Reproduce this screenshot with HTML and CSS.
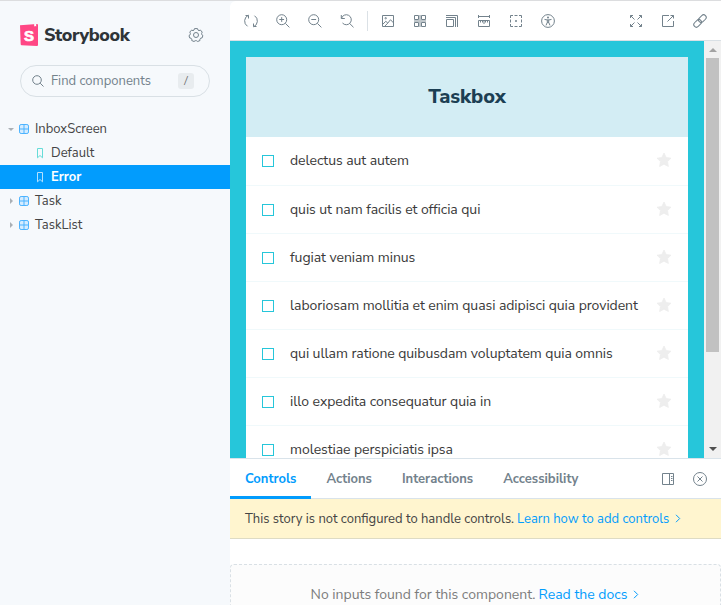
FILE: index.html
```html
<!DOCTYPE html>
<html lang="en">
<head>
<meta charset="utf-8">
<title>Storybook</title>
<link rel="stylesheet" href="styles.css">
</head>
<body>
<svg class="defs" aria-hidden="true">
  <symbol id="component" viewBox="0 0 10 10"><rect x=".5" y=".5" width="9" height="9" rx="1.600"/><path d="M5 1v8M1 5h8"/></symbol>
  <symbol id="bookmark" viewBox="0 0 8 11"><path d="M1.500 .5h5v9.300L4 7.500l-2.500 2.300z"/></symbol>
  <symbol id="star" viewBox="0 0 14 14"><path d="M7 0l2.200 4.500 4.800.7-3.500 3.400.9 4.900L7 11.200l-4.400 2.300.9-4.900L0 5.200l4.800-.7z"/></symbol>
  <symbol id="chevron" viewBox="0 0 6 9"><path d="M1 .8l3.700 3.700L1 8.200"/></symbol>
</svg>
<div class="app">
  <aside class="sidebar">
    <header class="brand">
      <svg class="logo" viewBox="0 0 18 22"><path d="M0 1.300L17 0q1 0 1 1v20q0 1-1 1L1.700 21.300q-1 0-1-1z"/><path class="notch" d="M14.200 0l2-.1v2.700l-1-.7-1 .7z"/><text x="9" y="17" text-anchor="middle">S</text></svg>
      <h1>Storybook</h1>
      <svg class="icon gear" viewBox="0 0 14 14"><path d="M5.500.6h3l.5 1.500 1 .5 1.500-.5 1.700 2-.6 1.500.3 1.200 1 .8-.8 2.300-1.400.3-.8 1 .1 1.300-2.300 1-1.200-.8H6.200l-1.200.8-2.300-1 .1-1.300-.8-1-1.400-.3L0 7.600l1.100-.8.300-1.200L.8 4.100l1.700-2 1.500.5 1-.5z"/><circle cx="7" cy="7" r="2.500"/></svg>
    </header>
    <div class="search">
      <svg class="icon" viewBox="0 0 12 12"><circle cx="5" cy="5" r="4.300"/><path d="M8.200 8.200l3.300 3.300"/></svg>
      <span>Find components</span><kbd>/</kbd>
    </div>
    <nav class="tree">
      <div class="node"><i class="arrow open"></i><svg class="component"><use href="#component"/></svg><span>InboxScreen</span></div>
      <div class="node story"><svg class="bookmark"><use href="#bookmark"/></svg><span>Default</span></div>
      <div class="node story selected"><svg class="bookmark"><use href="#bookmark"/></svg><span>Error</span></div>
      <div class="node"><i class="arrow"></i><svg class="component"><use href="#component"/></svg><span>Task</span></div>
      <div class="node"><i class="arrow"></i><svg class="component"><use href="#component"/></svg><span>TaskList</span></div>
    </nav>
  </aside>
  <main class="main">
    <div class="toolbar">
      <button><svg class="icon" viewBox="0 0 14 14"><path d="M4.500 1.200A6.300 6.300 0 0 0 3.500 12.300M1.500 1.500h3v3M9.500 12.800A6.300 6.300 0 0 0 10.500 1.700M12.500 12.500h-3v-3"/></svg></button>
      <button><svg class="icon" viewBox="0 0 14 14"><circle cx="5.700" cy="5.700" r="5"/><path d="M9.400 9.400l4 4M3.300 5.500h4.800M5.700 3.100v4.800"/></svg></button>
      <button><svg class="icon" viewBox="0 0 14 14"><circle cx="5.700" cy="5.700" r="5"/><path d="M9.400 9.400l4 4M3.300 5.500h4.800"/></svg></button>
      <button><svg class="icon" viewBox="0 0 14 14"><path d="M1.300 1v3.500h3.500M1.500 4.300a5 5 0 1 1 1 4.700M9.700 9.500l3.800 3.800"/></svg></button>
      <i class="divider"></i>
      <button><svg class="icon" viewBox="0 0 14 14"><path d="M1.500 1.500h11v11h-11zM1.500 10.500l3.300-3.200 2 1.800 2.700-3.400 3 3.200M3.500 12.500l3.300-3.400"/><circle cx="4.700" cy="4.200" r=".7"/></svg></button>
      <button><svg class="icon" viewBox="0 0 14 14"><path d="M1.500 1.500h4v4h-4zM8.500 1.500h4v4h-4zM1.500 8.500h4v4h-4zM8.500 8.500h4v4h-4z"/><path class="faint" d="M7 1v12M1 7h12"/></svg></button>
      <button><svg class="icon" viewBox="0 0 14 14"><path d="M1.500 5.500h7v7h-7zM1 3.500h9.500V13M1 1.500h11.500V13"/></svg></button>
      <button><svg class="icon" viewBox="0 0 14 14"><path d="M1.500 1v3M12.500 1v3M1.500 2.500h11M1.500 6.500h11v6h-11zM3.500 6.500v2M5.500 6.500v2M7 6.500v3.500M8.500 6.500v2M10.500 6.500v2"/></svg></button>
      <button><svg class="icon" viewBox="0 0 14 14"><path d="M1.500 4V1.500H4M5.500 1.500h3M10 1.500h2.500V4M12.500 5.500v3M12.500 10v2.500H10M8.500 12.500h-3M4 12.500H1.500V10M1.500 8.500v-3M6 7h2M7 6v2"/></svg></button>
      <button><svg class="icon" viewBox="0 0 14 14"><circle cx="7" cy="7" r="6.400"/><circle class="solid" cx="7" cy="3.500" r="1"/><path d="M3.500 5.400l2.500.5h2l2.500-.5M6.300 5.900v2.500l-1.300 3M7.700 5.900v2.500l1.300 3M6 8.300h2"/></svg></button>
      <span class="spacer"></span>
      <button><svg class="icon" viewBox="0 0 14 14"><path d="M1.500 4V1.500H4M1.500 1.500l4 4M10 1.500h2.500V4M12.500 1.500l-4 4M1.500 10v2.500H4M1.500 12.500l4-4M10 12.500h2.500V10M12.500 12.500l-4-4"/></svg></button>
      <button><svg class="icon" viewBox="0 0 14 14"><path d="M8 1.500H1.500v11h11V7M9.500 1.500h3v3M12.500 1.500L6.500 7.500"/></svg></button>
      <button><svg class="icon" viewBox="0 0 14 14"><g transform="rotate(-45 7 7)"><rect x="-.7" y="4.400" width="8.700" height="5.200" rx="2.600"/><rect x="6" y="4.400" width="8.700" height="5.200" rx="2.600"/></g></svg></button>
    </div>
    <div class="preview">
      <section class="canvas">
        <header class="title">Taskbox</header>
        <div class="task"><i class="check"></i><span>delectus aut autem</span><svg class="star"><use href="#star"/></svg></div>
        <div class="task"><i class="check"></i><span>quis ut nam facilis et officia qui</span><svg class="star"><use href="#star"/></svg></div>
        <div class="task"><i class="check"></i><span>fugiat veniam minus</span><svg class="star"><use href="#star"/></svg></div>
        <div class="task"><i class="check"></i><span>laboriosam mollitia et enim quasi adipisci quia provident</span><svg class="star"><use href="#star"/></svg></div>
        <div class="task"><i class="check"></i><span>qui ullam ratione quibusdam voluptatem quia omnis</span><svg class="star"><use href="#star"/></svg></div>
        <div class="task"><i class="check"></i><span>illo expedita consequatur quia in</span><svg class="star"><use href="#star"/></svg></div>
        <div class="task"><i class="check"></i><span>molestiae perspiciatis ipsa</span><svg class="star"><use href="#star"/></svg></div>
      </section>
      <div class="scrollbar"><i class="up"></i><i class="thumb"></i><i class="down"></i></div>
    </div>
    <div class="tabs">
      <span class="tab active">Controls</span><span class="tab">Actions</span><span class="tab">Interactions</span><span class="tab">Accessibility</span>
      <span class="spacer"></span>
      <button><svg class="icon" viewBox="0 0 14 14"><path d="M1.500 1.500h11v11h-11zM8.500 1.500v11M10 4.500h1.500M10 6.500h1.500M10 8.500h1.500"/></svg></button>
      <button><svg class="icon" viewBox="0 0 14 14"><circle cx="7" cy="7" r="6.500"/><path d="M4.500 4.500l5 5M9.500 4.500l-5 5"/></svg></button>
    </div>
    <div class="notice"><span>This story is not configured to handle controls.</span><a>Learn how to add controls</a><svg class="chevron"><use href="#chevron"/></svg></div>
    <div class="empty"><span>No inputs found for this component.</span><a>Read the docs</a><svg class="chevron"><use href="#chevron"/></svg></div>
  </main>
</div>
</body>
</html>
```
FILE: styles.css
```css
* { box-sizing: border-box; }
body { margin: 0; font: 13px/20px "Nunito Sans", Lato, "Open Sans", sans-serif; color: #444; overflow: hidden; }
.defs { position: absolute; width: 0; height: 0; }
svg { display: block; flex: none; overflow: visible; }
button { border: 0; padding: 0; background: none; width: 28px; height: 28px; display: flex; align-items: center; justify-content: center; flex: none; }
.icon { width: 14px; height: 14px; fill: none; stroke: #73828c; stroke-width: 1; }
.icon .faint { stroke-opacity: .45; stroke-width: 2; }
.icon .solid { fill: #73828c; stroke: none; }
.spacer { flex: 1; }
.app { display: flex; width: 721px; height: 605px; border-top: 1px solid #dcdddf; background: #f6f9fc; }

.sidebar { width: 230px; flex: none; }
.brand { display: flex; align-items: center; margin: 23px 27px 0 20px; height: 22px; }
.logo { width: 18px; height: 22px; fill: #ff4785; }
.logo .notch { fill: #fff; }
.logo text { fill: #fff; stroke: #fff; stroke-width: .7; font: 700 15px "Liberation Sans", sans-serif; }
h1 { margin: 0 auto 0 6px; font-size: 18px; line-height: 22px; font-weight: 800; letter-spacing: -.4px; color: #2e3438; }
.search { display: flex; align-items: center; margin: 19px 20px 0; height: 32px; border: 1px solid #d9e0e5; border-radius: 16px; padding: 0 15px 0 11px; color: #73828c; }
.search .icon { width: 12px; height: 12px; margin-right: 7px; }
kbd { margin-left: auto; width: 16px; height: 16px; border-radius: 3px; background: #e8ecef; font: 11px/16px Lato, sans-serif; text-align: center; color: #666; }
.tree { margin-top: 20px; }
.node { display: flex; align-items: center; height: 24px; padding-left: 8px; }
.node span { margin-top: -1px; }
.arrow { width: 11px; height: 8px; display: flex; align-items: center; justify-content: flex-start; padding-left: 2px; }
.arrow::before { content: ""; border: 3px solid transparent; border-left: 3px solid #aab0b5; border-right: 0; }
.arrow.open { padding-left: 0; }
.arrow.open::before { border: 3px solid transparent; border-top: 3px solid #aab0b5; border-bottom: 0; }
.component { width: 10px; height: 10px; margin-right: 6px; fill: #d5ecff; stroke: #4bb3ff; stroke-width: 1; }
.story { padding-left: 36px; }
.bookmark { width: 8px; height: 11px; margin-right: 7px; fill: none; stroke: #66dcd8; }
.selected { background: #029cfd; color: #fff; font-weight: 700; }
.selected .bookmark { stroke: #b3e1ff; }

.main { width: 491px; height: 604px; overflow: hidden; background: #fff; border-radius: 6px 0 0 0; display: flex; flex-direction: column; }
.toolbar { display: flex; align-items: center; gap: 4px; height: 40px; flex: none; padding: 0 7px; border-bottom: 1px solid #d9e0e5; }
.divider { width: 1px; height: 20px; background: #dbe1e6; margin: 0 2px; }
.preview { display: flex; height: 417px; flex: none; overflow: hidden; background: #26c6da; }
.canvas { margin: 16px 16px 0; width: 442px; flex: none; font-size: 14px; letter-spacing: -.06px; color: #3a3a3a; }
.title { height: 80px; background: #d3edf4; text-align: center; font-size: 20px; line-height: 79px; font-weight: 800; color: #1c3f53; }
.task { display: flex; align-items: center; height: 48px; background: #fff; border-bottom: 1px solid #f0f9fb; padding: 0 17px 0 16px; }
.task:nth-child(2) { height: 49px; padding-bottom: 1px; }
.check { width: 12px; height: 12px; border: 1px solid #26c6da; margin-right: 16px; margin-top: 1px; }
.star { width: 14px; height: 14px; margin-left: auto; margin-top: -1px; fill: #eee; stroke: #eee; stroke-width: .8; stroke-linejoin: round; }
.scrollbar { width: 17px; background: #f1f1f1; display: flex; flex-direction: column; align-items: center; flex: none; }
.up { margin-top: 7px; border: 4px solid transparent; border-bottom: 4px solid #a3a3a3; border-top: 0; }
.thumb { margin-top: 6px; width: 13px; height: 294px; background: #c1c1c1; }
.down { margin: auto 0 7px; border: 4px solid transparent; border-top: 4px solid #505050; border-bottom: 0; }

.tabs { display: flex; align-items: center; gap: 4px; height: 41px; flex: none; border: solid #d9e3ea; border-width: 1px 0; padding-right: 7px; }
.tab { height: 41px; margin: 0 -4px 0 0; padding: 1px 15px 0; line-height: 40px; font-weight: 700; color: #73828c; border-bottom: 3px solid transparent; }
.active { color: #029cfd; border-color: #029cfd; }
.notice { display: flex; align-items: center; height: 40px; flex: none; padding-left: 15px; background: #fff5cf; border-bottom: 1px solid #dedbc4; }
a { color: #029cfd; margin: 0 6px 0 3px; }
.chevron { width: 6px; height: 9px; fill: none; stroke: #029cfd; }
.empty { display: flex; align-items: flex-start; justify-content: center; height: 60px; flex: none; margin-top: 25px; padding: 20px 1px 0 0; border: 1px dashed #d9e0e5; border-radius: 4px; background: #fcfcfc; color: #7c7c7c; font-size: 14px; }
.empty .chevron { margin-top: 5px; }
```
